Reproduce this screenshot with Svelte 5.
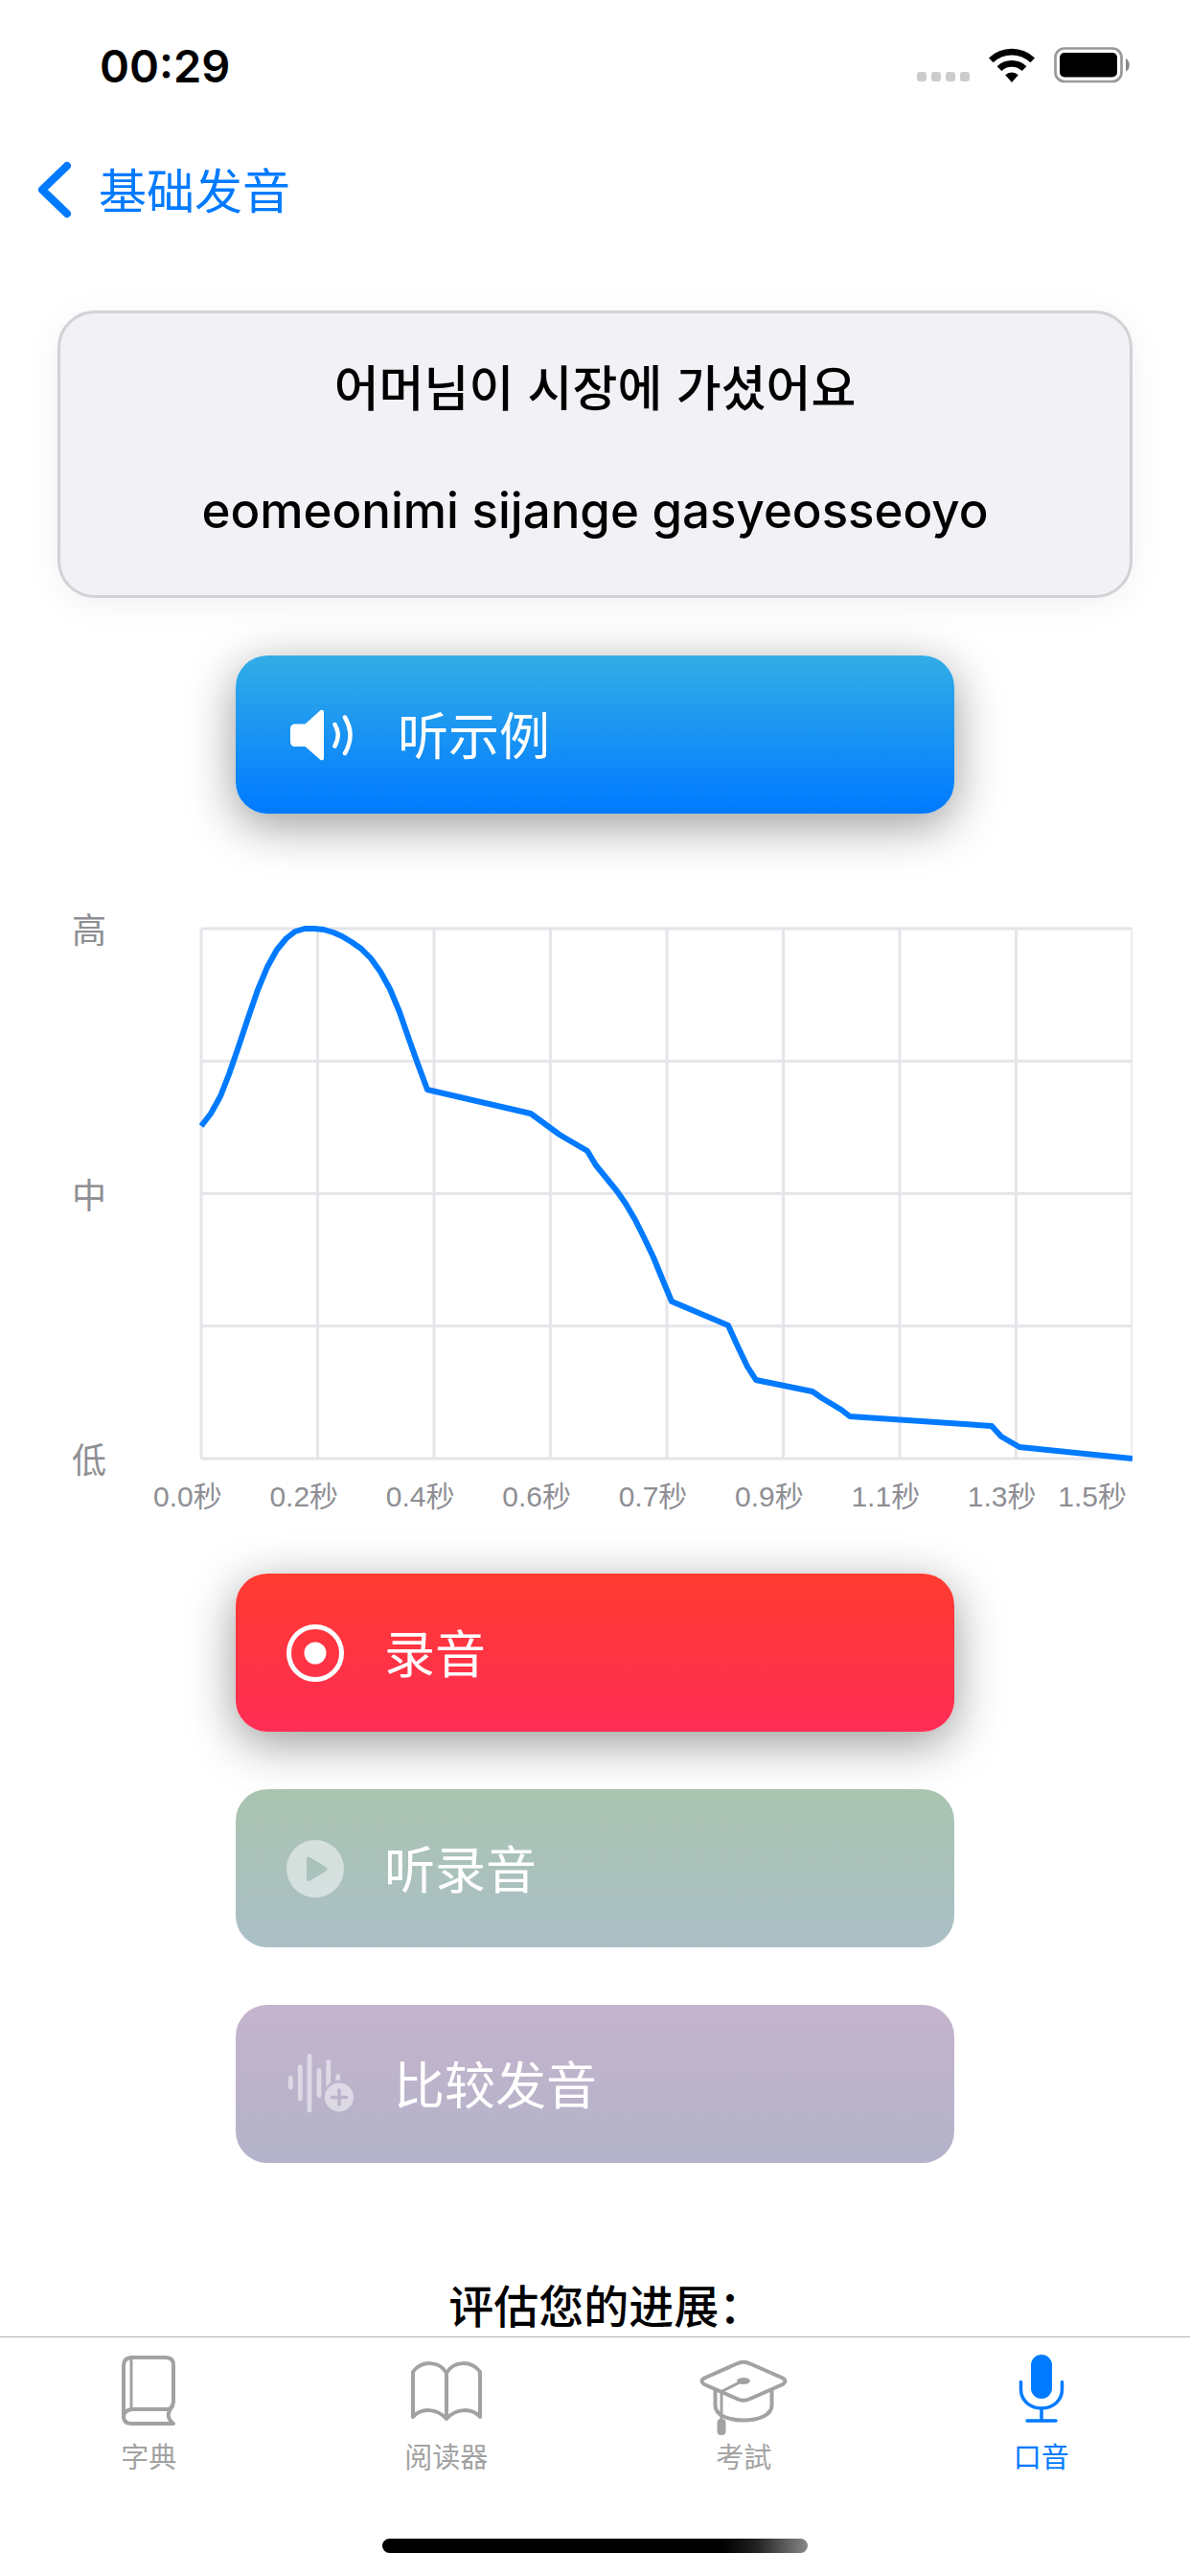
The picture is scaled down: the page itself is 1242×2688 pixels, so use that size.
<script lang="ts">
  const pitchLevels = ["高", "中", "低"];
  const times = ["0.0", "0.2", "0.4", "0.6", "0.7", "0.9", "1.1", "1.3", "1.5"];

  const chartWidth = 972;
  const chartHeight = 553;
  const columns = Array.from({ length: 9 }, (_, i) => (chartWidth / 8) * i);
  const rows = Array.from({ length: 5 }, (_, i) => (chartHeight / 4) * i);

  const pitch = [
    [0, 206], [10, 193], [20, 175], [29, 152], [39, 123], [49, 93], [59, 64],
    [69, 40], [79, 22], [89, 10], [98, 3], [108, 0], [118, 0], [128, 1],
    [138, 4], [147, 8], [157, 14], [167, 21], [177, 31], [187, 45], [197, 63],
    [207, 87], [216, 113], [226, 141], [236, 168], [344, 193], [374, 215],
    [403, 232], [412, 247], [434, 274], [443, 287], [453, 304], [462, 322],
    [472, 343], [481, 365], [491, 389], [550, 414], [560, 436], [570, 457],
    [579, 471], [638, 483], [648, 490], [668, 502], [677, 509], [825, 519],
    [835, 530], [854, 541], [972, 553],
  ];
  const line = pitch.map((p) => p.join(",")).join(" ");

  let current = $state("accent");
  const tabs = [
    { id: "dictionary", label: "字典" },
    { id: "reader", label: "阅读器" },
    { id: "exam", label: "考試" },
    { id: "accent", label: "口音" },
  ];
</script>

<div class="screen">
  <header>
    <div class="status">
      <time>00:29</time>
      <div class="status-icons">
        <div class="dots"><i></i><i></i><i></i><i></i></div>
        <svg class="wifi" viewBox="0 0 48 36" aria-hidden="true">
          <path d="M0 10.5a34.5 34.5 0 0 1 48 0l-4.6 4.7a28 28 0 0 0-38.8 0z" />
          <path d="M8.6 19.2a22.2 22.2 0 0 1 30.8 0l-4.7 4.7a15.6 15.6 0 0 0-21.4 0z" />
          <path d="M17.2 28.3a9.8 9.8 0 0 1 13.6 0L24 36z" />
        </svg>
        <svg class="battery" viewBox="0 0 80 38" aria-hidden="true">
          <rect x="1.5" y="1.5" width="69" height="34.5" rx="9.5" fill="none" stroke="#999" stroke-width="2.7" />
          <rect x="6" y="6" width="60" height="25.5" rx="5" />
          <path d="M75 12c5 2.5 5 11.5 0 13.5z" fill="#888" />
        </svg>
      </div>
    </div>
    <nav>
      <a class="back" href="#basics">
        <svg viewBox="0 0 36 60" aria-hidden="true">
          <path d="M31 5L5 30l26 25" />
        </svg>
        <span>基础发音</span>
      </a>
    </nav>
  </header>

  <main>
    <section class="phrase">
      <p lang="ko">어머님이 시장에 가셨어요</p>
      <p>eomeonimi sijange gasyeosseoyo</p>
    </section>

    <button class="action listen">
      <svg width="74" height="60" viewBox="0 0 74 60" aria-hidden="true">
        <path
          d="M9 18.5h10.5L35 4.5c1.5-1.5 4-1 4 1.5v48c0 2.500-2.500 3-4 1.500L19.500 42H9c-3 0-5-2-5-5V23.500c0-3 2-5 5-5z"
          fill="#fff"
        />
        <path d="M50.5 19q6.5 11.3 0 22.5M61 11.5q11 18.5 0 37.5" fill="none" stroke="#fff" stroke-width="4.5" stroke-linecap="round" />
      </svg>
      <span>听示例</span>
    </button>

    <figure class="chart">
      <div class="plot">
        <ul class="levels">
          {#each pitchLevels as level}
            <li>{level}</li>
          {/each}
        </ul>
        <svg viewBox="-2 -3 974 559" role="img" aria-label="音高">
          {#each rows as y}
            <line x1="0" x2={chartWidth} y1={y} y2={y} />
          {/each}
          {#each columns as x}
            <line x1={x} x2={x} y1="0" y2={chartHeight} />
          {/each}
          <polyline points={line} />
        </svg>
      </div>
      <ol class="times">
        {#each times as time}
          <li>{time}秒</li>
        {/each}
      </ol>
    </figure>

    <div class="actions">
      <button class="action record">
        <svg width="60" height="60" viewBox="0 0 60 60" aria-hidden="true">
          <circle cx="30" cy="30" r="27.5" fill="none" stroke="#fff" stroke-width="5" />
          <circle cx="30" cy="30" r="11.5" fill="#fff" />
        </svg>
        <span>录音</span>
      </button>

      <button class="action replay" disabled>
        <svg width="60" height="60" viewBox="0 0 60 60" aria-hidden="true">
          <path
            fill="#fff"
            fill-rule="evenodd"
            d="M30 0a30 30 0 1 1 0 60a30 30 0 1 1 0-60zM21 19.500v21.500c0 1.800 1.500 2.500 3 1.700l17.500-10.500c1.500-1 1.500-2.700 0-3.600L24 17.800c-1.500-.8-3-.1-3 1.700z"
          />
        </svg>
        <span>听录音</span>
      </button>

      <button class="action compare" disabled>
        <svg width="70" height="64" viewBox="0 0 70 64" aria-hidden="true">
          <mask id="badge">
            <rect width="72" height="64" fill="#fff" />
            <circle cx="56" cy="45.5" r="18" fill="#000" />
          </mask>
          <g stroke="#fff" stroke-width="4.8" stroke-linecap="round" mask="url(#badge)">
            <path d="M4.3 25.5V35M14.3 14v33M24 2.5v56.5M34 17.5V43.5M43.7 8.5V40M53.7 23.5V40" />
          </g>
          <path
            fill="#fff"
            fill-rule="evenodd"
            d="M55 30.500a15 15 0 1 1 0 30a15 15 0 1 1 0-30zM53.200 38v5.700h-5.700a1.800 1.800 0 0 0 0 3.600h5.700V53a1.800 1.800 0 0 0 3.600 0v-5.700h5.700a1.800 1.800 0 0 0 0-3.600h-5.700V38a1.800 1.800 0 0 0-3.600 0z"
          />
        </svg>
        <span>比较发音</span>
      </button>
    </div>

    <h2>评估您的进展：</h2>
  </main>

  <footer>
    <div class="tabs">
      {#each tabs as tab}
        <button
          class="tab"
          class:selected={current === tab.id}
          aria-pressed={current === tab.id}
          onclick={() => (current = tab.id)}
        >
          <svg viewBox="0 0 96 88" aria-hidden="true">
            {#if tab.id === "dictionary"}
              <path d="M22 67V13Q22 4 31 4H66Q74 4 74 12V50Q74 54 70 58H31Q22 59 22 66Q22 73 31 73H74Q64 65 73 55" />
              <path d="M30 4V58" stroke-width="3" />
            {:else if tab.id === "reader"}
              <path d="M48 20C40 7 22 7 13 19V66C22 56 38 57 48 68C58 57 74 56 83 66V19C74 7 56 7 48 20V68" />
            {:else if tab.id === "exam"}
              <path d="M41 10.5Q48 7 55 10.5L89 25.5Q94 28.7 89 32L55 47Q48 50.5 41 47L7 32Q2 28.7 7 25.5Z" />
              <path d="M18.5 38V54C18.5 64 32 69.5 48 69.5S77.5 64 77.5 54V38" />
              <path d="M44 30L25 39.5V70" stroke-width="3" />
              <ellipse class="solid" cx="48" cy="28.5" rx="7" ry="3.5" />
              <rect class="solid" x="20.5" y="68" width="9" height="17" rx="4" />
            {:else}
              <rect class="solid" x="37" y="1" width="22" height="46" rx="11" />
              <path d="M26.5 29.5V37C26.5 49 36 57 48 57S69.5 49 69.5 37V29.5M48 57V70M33 70H63" stroke-width="3.5" />
            {/if}
          </svg>
          {tab.label}
        </button>
      {/each}
    </div>
    <div class="home"></div>
  </footer>
</div>

<style>
  :global(body) {
    background: #fff;
  }
  .screen {
    display: flex;
    flex-direction: column;
    height: 100vh;
    font-family: Inter, "Noto Sans CJK SC", sans-serif;
    color: #000;
  }
  button {
    border: none;
    font-family: inherit;
  }
  ul,
  ol,
  figure,
  p {
    margin: 0;
    padding: 0;
    list-style: none;
  }

  .status {
    display: flex;
    justify-content: space-between;
    align-items: center;
    height: 136px;
    padding: 0 62px 0 104px;
  }
  .status time {
    font-size: 47px;
    font-weight: 600;
  }
  .status-icons {
    display: flex;
    align-items: center;
    gap: 20px;
  }
  .dots {
    display: flex;
    align-self: flex-end;
    gap: 5px;
    margin-bottom: 2px;
  }
  .dots i {
    width: 10px;
    height: 10px;
    border-radius: 3px;
    background: #ccc;
  }
  .wifi {
    width: 48px;
    height: 36px;
  }
  .battery {
    width: 80px;
    height: 38px;
  }

  nav {
    display: flex;
    align-items: center;
    height: 124px;
    padding: 0 39px 4px;
  }
  .back {
    display: flex;
    align-items: center;
    gap: 28px;
    color: #007aff;
    font-size: 50px;
    text-decoration: none;
  }
  .back span,
  .action span {
    padding-bottom: 4px;
  }
  .back svg {
    width: 36px;
    height: 60px;
    fill: none;
    stroke: currentColor;
    stroke-width: 8;
    stroke-linecap: round;
    stroke-linejoin: round;
  }

  main {
    flex: 1;
    min-height: 0;
    overflow: hidden;
    padding: 60px 60px 0;
  }
  .phrase {
    padding: 43px 30px 56px;
    border: 3px solid #d1d1d6;
    border-radius: 39px;
    background: #f2f1f6;
    box-shadow: 0 6px 36px rgba(0, 0, 0, 0.06);
    font-size: 51px;
    font-weight: 500;
    line-height: 65px;
    text-align: center;
  }
  .phrase p + p {
    margin-top: 65px;
  }
  .phrase p:lang(ko) {
    font-family: "Noto Sans CJK KR", sans-serif;
  }

  .action {
    display: flex;
    align-items: center;
    gap: 42px;
    width: calc(100% - 372px);
    height: 165px;
    margin: 0 auto;
    padding: 0 53px;
    border-radius: 33px;
    color: #fff;
    font-size: 53px;
  }
  .action svg {
    flex: none;
  }
  .action:enabled {
    box-shadow: 0 12px 50px rgba(0, 0, 0, 0.4);
  }
  .action:disabled svg {
    opacity: 0.5;
  }
  .listen {
    margin-top: 60px;
    background: linear-gradient(#32ade6, #007aff);
  }
  .record {
    background: linear-gradient(#ff3b30, #ff2d55);
  }
  .replay {
    background: linear-gradient(#aac4b0, #abbfc7);
  }
  .compare {
    background: linear-gradient(#c5b4cd, #b3b3c9);
  }
  .actions {
    display: flex;
    flex-direction: column;
    gap: 60px;
  }

  .chart {
    margin: 117px 0 60px;
    color: #8e8e93;
    font-family: "Liberation Sans", "Noto Sans CJK SC", sans-serif;
  }
  .plot {
    display: flex;
  }
  .levels {
    display: flex;
    flex-direction: column;
    justify-content: space-between;
    width: 133px;
    margin: -12px 0 -18px;
    padding-left: 15px;
    font-size: 36px;
    line-height: 36px;
  }
  .plot svg {
    flex: 1;
    min-width: 0;
  }
  .plot line {
    stroke: #e5e5ea;
    stroke-width: 3;
  }
  .plot polyline {
    fill: none;
    stroke: #007aff;
    stroke-width: 6;
    stroke-linejoin: round;
  }
  .times {
    display: flex;
    height: 38px;
    margin: 19px 0 0 100px;
    font-size: 30px;
    line-height: 36px;
  }
  .times li {
    flex: 0 0 11.88%;
    white-space: nowrap;
  }
  .times li:nth-last-child(-n + 2) {
    flex-basis: auto;
  }
  .times li:last-child {
    margin-left: auto;
    padding-right: 6px;
  }

  h2 {
    margin: 114px 0 0;
    font-size: 47px;
    font-weight: 500;
    line-height: 72px;
    text-align: center;
    font-feature-settings: "halt";
  }

  footer {
    border-top: 1px solid #b2b2b2;
    background: #fff;
  }
  .tabs {
    display: flex;
  }
  .tab {
    display: flex;
    flex: 1;
    flex-direction: column;
    align-items: center;
    gap: 2px;
    padding: 17px 0 0;
    background: none;
    color: #a2a2a2;
    font-size: 29px;
    line-height: 38px;
  }
  .tab.selected {
    color: #007aff;
  }
  .tab svg {
    width: 96px;
    height: 88px;
    fill: none;
    stroke: currentColor;
    stroke-width: 4;
    stroke-linecap: round;
    stroke-linejoin: round;
  }
  .tab .solid {
    fill: currentColor;
    stroke: none;
  }
  .home {
    width: 444px;
    height: 15px;
    margin: 65px auto 24px;
    border-radius: 8px;
    background: linear-gradient(to right, #000 80%, #222 88%, #888);
  }
</style>
